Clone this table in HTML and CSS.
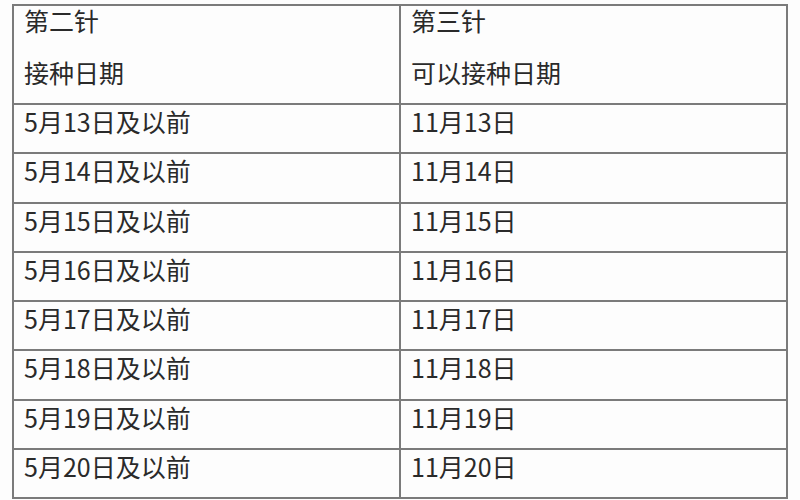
FILE: index.html
```html
<!DOCTYPE html>
<html lang="zh">
<head>
<meta charset="utf-8">
<link rel="stylesheet" href="styles.css">
</head>
<body>
<div class="table">
  <div class="cell head"><div class="line">第二针</div><div class="line second">接种日期</div></div>
  <div class="cell head"><div class="line">第三针</div><div class="line second">可以接种日期</div></div>
  <div class="cell">5月13日及以前</div><div class="cell">11月13日</div>
  <div class="cell">5月14日及以前</div><div class="cell">11月14日</div>
  <div class="cell">5月15日及以前</div><div class="cell">11月15日</div>
  <div class="cell">5月16日及以前</div><div class="cell">11月16日</div>
  <div class="cell">5月17日及以前</div><div class="cell">11月17日</div>
  <div class="cell">5月18日及以前</div><div class="cell">11月18日</div>
  <div class="cell">5月19日及以前</div><div class="cell">11月19日</div>
  <div class="cell">5月20日及以前</div><div class="cell">11月20日</div>
</div>
</body>
</html>
```
FILE: styles.css
```css
html, body {
  margin: 0;
  padding: 0;
  background: #fdfdfd;
  overflow: hidden;
}
body {
  width: 800px;
  height: 500px;
  padding: 4px 0 0 12px;
  box-sizing: border-box;
  font-family: "Noto Sans CJK SC", "Noto Sans", sans-serif;
  color: #2a2a2a;
}
.table {
  display: grid;
  grid-template-columns: 385px 385px;
  grid-template-rows: 97px repeat(8, 47.3px);
  gap: 2px;
  padding: 2px;
  width: max-content;
  background: #7b7b7b;
}
.cell {
  background: #fdfdfd;
  font-size: 25px;
  line-height: 30px;
  padding: 1px 0 0 10px;
  white-space: nowrap;
}
.cell.head {
  padding-top: 0;
}
.line {
  line-height: 28px;
}
.line.second {
  margin-top: 24px;
}
```
